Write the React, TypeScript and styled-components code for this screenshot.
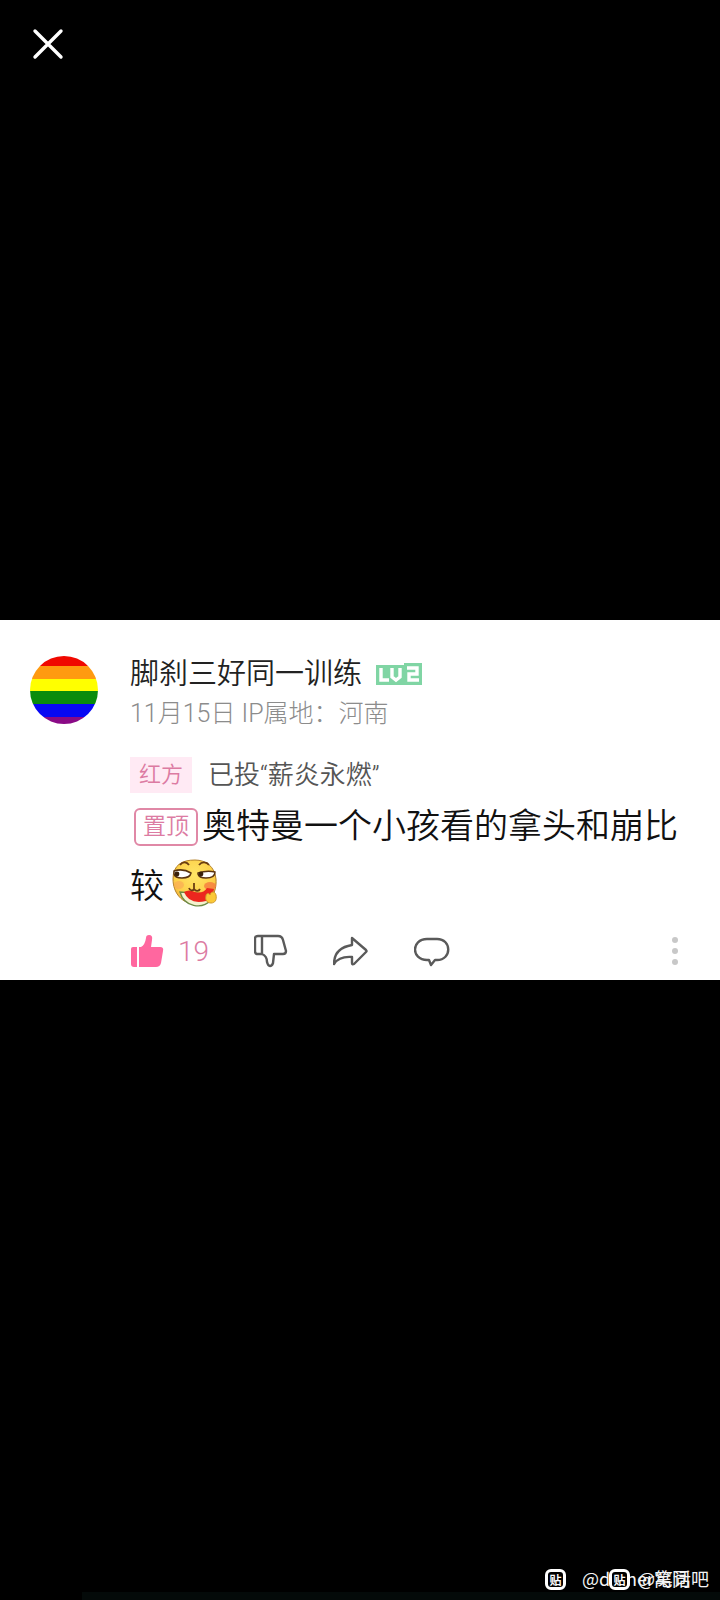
import React from "react";
import styled, { createGlobalStyle } from "styled-components";

const GlobalStyle = createGlobalStyle`
  * { box-sizing: border-box; }
  body { margin: 0; background: #000; }
  button { font: inherit; color: inherit; background: none; border: 0; padding: 0; cursor: pointer; }
`;

const Viewer = styled.main`
  position: relative;
  min-height: 100vh;
  display: flex;
  flex-direction: column;
  justify-content: center;
  background: #000;
  font-family: Roboto, "Noto Sans CJK SC", sans-serif;
  font-weight: 350;
`;

const CloseButton = styled.button`
  position: absolute;
  top: 28px;
  left: 32px;
  width: 32px;
  height: 32px;
  svg { display: block; }
`;

const Comment = styled.article`
  display: flex;
  gap: 32px;
  padding: 36px 30px 10px;
  background: #fff;
`;

const Avatar = styled.svg`
  flex: none;
  width: 68px;
  height: 68px;
`;

const Body = styled.div`
  flex: 1;
  min-width: 0;
`;

const NameRow = styled.header`
  display: flex;
  align-items: center;
  gap: 14px;
  height: 36px;
`;

const Name = styled.h1`
  margin: 0;
  font-size: 29px;
  line-height: 36px;
  font-weight: 350;
  color: #222;
`;

const Meta = styled.p`
  margin: 5px 0 0;
  font-size: 25px;
  line-height: 34px;
  font-weight: 300;
  color: #8c8c8c;
`;

const VoteRow = styled.div`
  display: flex;
  align-items: center;
  gap: 16px;
  margin-top: 26px;
  height: 36px;
  font-size: 26px;
  line-height: 36px;
  color: #555;
`;

const Side = styled.span`
  padding: 0 9px;
  font-size: 22px;
  line-height: 36px;
  color: #dc7ba2;
  background: #ffeaf4;
`;

const Content = styled.p`
  margin: 3px 0 0;
  font-size: 34px;
  line-height: 60px;
  color: #111;
`;

const Pinned = styled.span`
  display: inline-block;
  margin: 0 4px;
  padding: 0 7px;
  border: 2px solid #e088a6;
  border-radius: 6px;
  font-size: 23px;
  line-height: 34px;
  vertical-align: 4px;
  color: #dc7ba2;
`;

const Emoji = styled.svg`
  width: 46px;
  height: 48px;
  margin-left: 8px;
  vertical-align: -9px;
`;

const Actions = styled.footer`
  display: flex;
  align-items: center;
  gap: 45px;
  margin-top: 16px;
  height: 38px;
`;

const Action = styled.button<{ $end?: boolean }>`
  display: flex;
  align-items: center;
  gap: 14px;
  margin-left: ${(p) => (p.$end ? "auto" : "0")};
  font-size: 28px;
  line-height: 38px;
  color: #dc7ba2;
  svg { display: block; }
`;

const Count = styled.span`
  padding-top: 2px;
`;

const Watermark = styled.div<{ $right: number; $gap: number }>`
  position: absolute;
  right: ${(p) => p.$right}px;
  bottom: 8px;
  display: flex;
  align-items: center;
  gap: ${(p) => p.$gap}px;
  font-family: "Noto Sans CJK SC", sans-serif;
  font-size: 18px;
  line-height: 22px;
  font-weight: 400;
  white-space: nowrap;
  color: #f4f4f4;
`;

const Handle = styled.span`
  padding-bottom: 3px;
`;

const Logo = styled.span`
  display: grid;
  place-items: center;
  width: 21px;
  height: 21px;
  border: 3px solid #fff;
  border-radius: 6px;
  background: #000;
  font-size: 12px;
  line-height: 14px;
  font-weight: 700;
  color: #fff;
`;

const BottomGlow = styled.div`
  position: absolute;
  left: 82px;
  right: 0;
  bottom: 0;
  height: 8px;
  background: #040a09;
`;

const stroke = { fill: "none", stroke: "#5a5a5a", strokeWidth: 2.4, strokeLinejoin: "round", strokeLinecap: "round" } as const;

const LevelBadge = () => (
  <svg width="46" height="24" viewBox="0 0 46 24" role="img" aria-label="LV2">
    <path d="M0 3h28V1h18v22H0z" fill="#80d5a4" />
    <g fill="none" stroke="#fff" strokeWidth="3.4">
      <path d="M5 6v12h8" />
      <path d="M16 6v9l4 3 4-3V6" />
      <path d="M31 6h10v6h-8v6h10" />
    </g>
  </svg>
);

const MelonFace = () => (
  <Emoji viewBox="0 0 46 48" role="img" aria-label="吃瓜">
    <defs>
      <radialGradient id="face" cx="50%" cy="35%" r="65%">
        <stop offset="0" stopColor="#ffe566" />
        <stop offset="0.7" stopColor="#fdd04a" />
        <stop offset="1" stopColor="#efae38" />
      </radialGradient>
    </defs>
    <path d="M23 1C34 1 43 8 44 20c1 14-6 25-20 25S1 34 1 20 10 1 23 1z" fill="url(#face)" stroke="#b5822a" />
    <ellipse cx="7" cy="26" rx="5" ry="4" fill="#f9ab55" opacity=".7" />
    <ellipse cx="38" cy="27" rx="6" ry="4" fill="#f57b3e" opacity=".8" />
    <path d="M8 33C12 48 30 51 39 41L34 35z" fill="#f4f2cf" stroke="#6d8a45" strokeWidth="1.4" />
    <path d="M12 33Q17 30 23 33 31 35 35 29L42 30Q41 38 34 42 17 46 12 33z" fill="#ec261e" />
    <path d="M34 37c0-3 3-3 4-1 1-4 5-4 6 0 1 5-1 8-5 8s-6-3-5-7z" fill="#fbc937" stroke="#d19a2c" />
    <g fill="#fff" stroke="#5a3310" strokeWidth="1.5">
      <path d="M2 12q9-3 17 2-1 5-9 5-7 0-8-4z" />
      <path d="M26 14q9-3 17-1 0 6-9 6-7 0-8-4z" />
    </g>
    <circle cx="5" cy="15" r="2.4" fill="#3a210b" />
    <circle cx="29" cy="15" r="2.4" fill="#3a210b" />
    <path d="M8 6c3-4 7-3 9 0M27 6c3-4 8-3 10 0M22 24v7M17 29c1 3 4 3 5 1 2 3 5 2 6 0" fill="none" stroke="#6b3d12" strokeWidth="1.8" />
  </Emoji>
);

const TiebaMark = () => <Logo>贴</Logo>;

export default function App() {
  return (
    <Viewer>
      <GlobalStyle />
      <CloseButton aria-label="关闭">
        <svg width="32" height="32" viewBox="0 0 32 32">
          <path d="M3 3l26 26M29 3L3 29" stroke="#fff" strokeWidth="3.4" strokeLinecap="round" />
        </svg>
      </CloseButton>

      <Comment>
        <Avatar viewBox="0 0 68 68" role="img" aria-label="头像">
          <clipPath id="disc"><circle cx="34" cy="34" r="34" /></clipPath>
          <g clipPath="url(#disc)">
            <rect width="68" height="10" fill="#f00800" />
            <rect y="10" width="68" height="13" fill="#ff9a10" />
            <rect y="23" width="68" height="12" fill="#ffff00" />
            <rect y="35" width="68" height="13" fill="#0a8c0c" />
            <rect y="48" width="68" height="13" fill="#0808f4" />
            <rect y="61" width="68" height="7" fill="#8a0a86" />
          </g>
        </Avatar>
        <Body>
          <NameRow>
            <Name>脚刹三好同一训练</Name>
            <LevelBadge />
          </NameRow>
          <Meta>11月15日 IP属地：河南</Meta>
          <VoteRow>
            <Side>红方</Side>
            <span>已投“薪炎永燃”</span>
          </VoteRow>
          <Content>
            <Pinned>置顶</Pinned>奥特曼一个小孩看的拿头和崩比较<MelonFace />
          </Content>
          <Actions>
            <Action aria-label="点赞 19">
              <svg width="34" height="34" viewBox="0 0 34 34" fill="#ff679f">
                <path d="M3 13h4v20H4q-3 0-3-3V15q0-2 2-2z" />
                <path d="M9 13h2q4-2 5-9 0-3 3-3 4 0 3 5l-1 7h9q4 0 3 4l-2 12q-1 4-5 4H9z" />
              </svg>
              <Count>19</Count>
            </Action>
            <Action aria-label="点踩">
              <svg width="34" height="34" viewBox="0 0 34 34" {...stroke}>
                <path d="M4 2h20q4 0 5 4l3 11q0 3-3 3h-9l-1 9q-1 3-3 3-2 0-3-4 0-6-5-8H4q-3 0-3-3V5q0-3 3-3zM8 2v18" />
              </svg>
            </Action>
            <Action aria-label="分享">
              <svg width="36" height="32" viewBox="0 0 36 32" {...stroke}>
                <path d="M19 3l14 12q1 1 0 2L21 29q-2 1-2-1v-6Q6 21 1 29 1 13 19 10z" />
              </svg>
            </Action>
            <Action aria-label="回复">
              <svg width="36" height="32" viewBox="0 0 36 32" {...stroke}>
                <path d="M13 4h10c15 0 15 21 0 21h-2l-4 5-2-5h-2C-3 25-3 4 13 4z" />
              </svg>
            </Action>
            <Action $end aria-label="更多">
              <svg width="30" height="30" viewBox="0 0 30 30" fill="#c8c8c8">
                <circle cx="15" cy="4" r="3" />
                <circle cx="15" cy="15" r="3" />
                <circle cx="15" cy="26" r="3" />
              </svg>
            </Action>
          </Actions>
        </Body>
      </Comment>

      <BottomGlow />
      <Watermark $right={30} $gap={16}><TiebaMark /><Handle>@dinner窝同</Handle></Watermark>
      <Watermark $right={11} $gap={8}><TiebaMark /><Handle>@笔话吧</Handle></Watermark>
    </Viewer>
  );
}
